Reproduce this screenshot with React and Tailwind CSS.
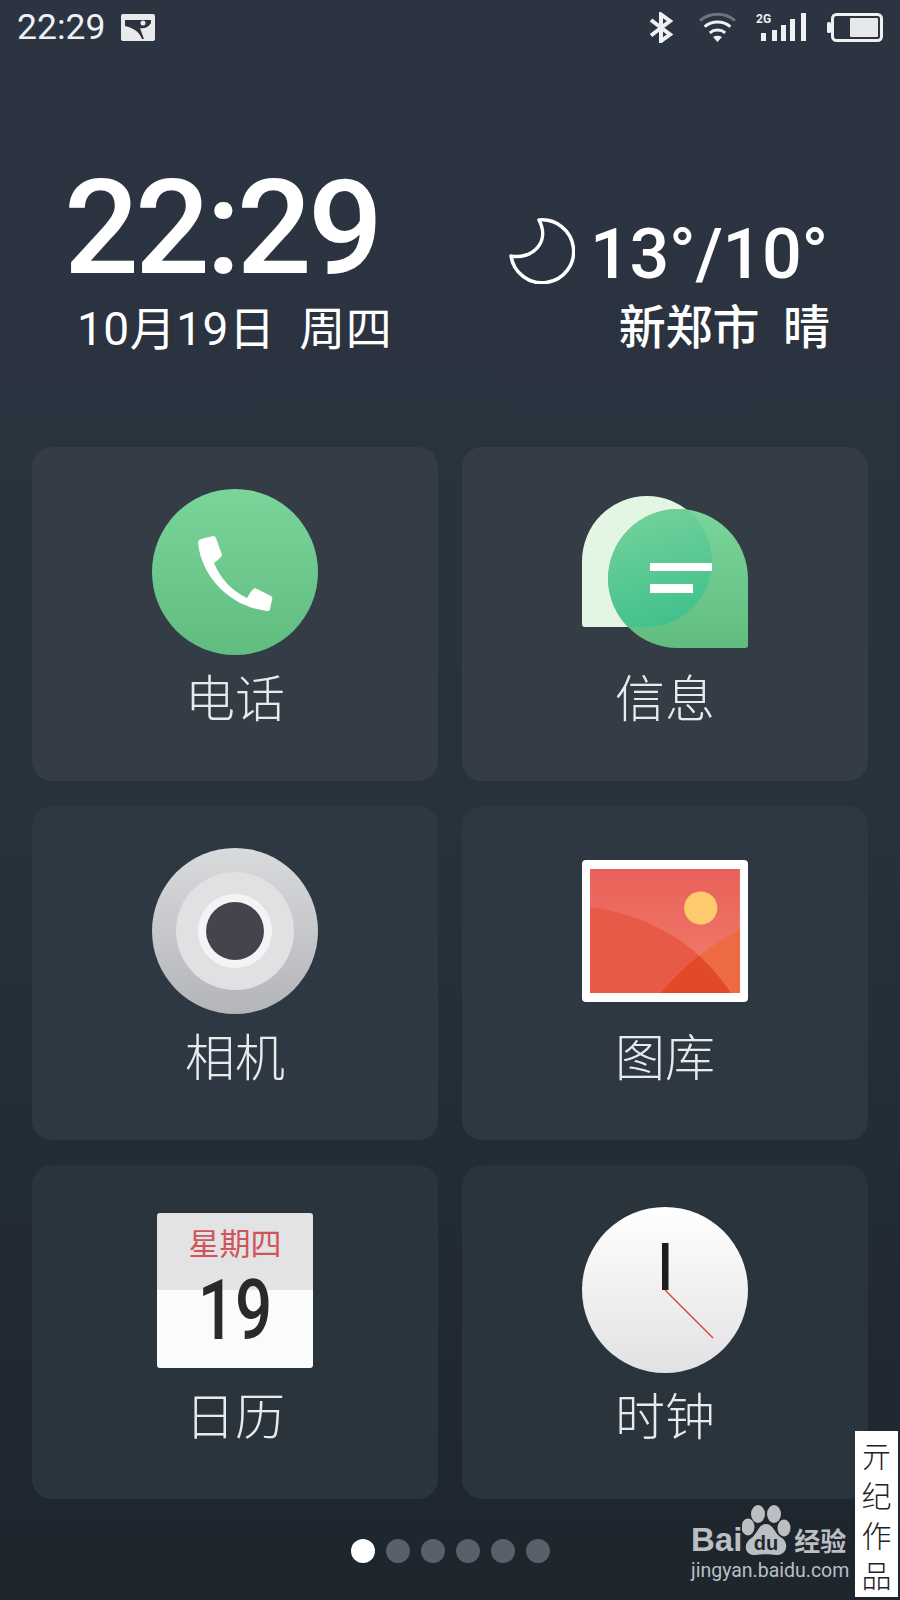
const cjk = 'font-["Roboto","Noto_Sans_CJK_SC",sans-serif]'

const PhoneIcon = () => (
  <svg width="166" height="166" viewBox="0 0 166 166">
    <defs>
      <linearGradient id="phone" x1="0" y1="0" x2="0" y2="1">
        <stop offset="0" stopColor="#7ad59b" />
        <stop offset="1" stopColor="#61bc80" />
      </linearGradient>
    </defs>
    <circle cx="83" cy="83" r="83" fill="url(#phone)" />
    <path
      d="M46 54 Q46 51 49 50 L61 47 Q63 47 64 49 L70 66 Q70 68 62 74 Q72 98 95 109 Q100 100 103 99 L119 107 Q121 108 120 111 L118 120 Q118 122 115 122 C80 118 50 90 46 54Z"
      fill="#fff"
    />
  </svg>
)

const MessageIcon = () => {
  const back = 'M0 65 A65 65 0 0 1 130 65 A65.500 65.500 0 0 1 65 131 L3 131 Q0 131 0 128Z'
  const front = 'M26 83 A70 70 0 0 1 166 83 L166 149 Q166 152 163 152 L96 152 A70 70 0 0 1 26 83Z'
  return (
    <svg width="166" height="152" viewBox="0 0 166 152">
      <defs>
        <linearGradient id="msgFront" x1="0" y1="0" x2="0" y2="1">
          <stop offset="0" stopColor="#7ad59c" />
          <stop offset="1" stopColor="#61bd7f" />
        </linearGradient>
        <linearGradient id="msgMix" x1="0" y1="0" x2="0.3" y2="1">
          <stop offset="0" stopColor="#78d29b" />
          <stop offset="1" stopColor="#3abf8b" />
        </linearGradient>
        <clipPath id="msgClip">
          <path d={back} />
        </clipPath>
      </defs>
      <path d={back} fill="#e2f6e3" />
      <path d={front} fill="url(#msgFront)" />
      <path d={front} fill="url(#msgMix)" clipPath="url(#msgClip)" />
      <rect x="68" y="67" width="62" height="8" fill="#fff" />
      <rect x="68" y="88" width="43" height="9" fill="#fff" />
    </svg>
  )
}

const CameraIcon = () => (
  <svg width="166" height="166" viewBox="0 0 166 166">
    <defs>
      <linearGradient id="cam" x1="0" y1="0" x2="0" y2="1">
        <stop offset="0" stopColor="#d9dadc" />
        <stop offset="1" stopColor="#b4b5b9" />
      </linearGradient>
    </defs>
    <circle cx="83" cy="83" r="83" fill="url(#cam)" />
    <circle cx="83" cy="83" r="59" fill="#e0e1e3" />
    <circle cx="83" cy="83" r="37" fill="#f4f4f6" />
    <circle cx="83" cy="83" r="29" fill="#45434c" />
  </svg>
)

const GalleryIcon = () => (
  <svg width="166" height="142" viewBox="0 0 165 142" preserveAspectRatio="none">
    <defs>
      <linearGradient id="sky" x1="0" y1="0" x2="0" y2="1">
        <stop offset="0" stopColor="#e9605a" />
        <stop offset="1" stopColor="#f1806c" />
      </linearGradient>
      <clipPath id="leftHill">
        <path d="M8 47 Q100 60 148 133 L8 133Z" />
      </clipPath>
    </defs>
    <rect width="165" height="142" rx="4" fill="#fff" />
    <rect x="8" y="9" width="149" height="124" fill="url(#sky)" />
    <circle cx="118" cy="48" r="16.500" fill="#fdcb6e" />
    <path d="M8 47 Q100 60 148 133 L8 133Z" fill="#e85a48" />
    <path d="M78 133 Q110 95 157 69 L157 133Z" fill="#ee6a43" />
    <path d="M78 133 Q110 95 157 69 L157 133Z" fill="#e04a28" clipPath="url(#leftHill)" />
  </svg>
)

const CalendarIcon = () => (
  <div className="relative flex h-[155px] w-[156px] flex-col overflow-hidden rounded-[3px]">
    <div className="flex h-[77px] justify-center bg-[#e3e2e4] pt-[12px]">
      <span className={`${cjk} text-[31px] leading-[40px] text-[#d0555a]`}>星期四</span>
    </div>
    <div className="flex-1 bg-[#fafbfd]" />
    <span className="absolute inset-x-0 top-[50px] scale-x-[0.78] text-center font-['Roboto',sans-serif] text-[84px] leading-[96px] font-medium text-[#2a2a2d]">
      19
    </span>
  </div>
)

const ClockIcon = () => (
  <svg width="166" height="166" viewBox="0 0 166 166">
    <defs>
      <linearGradient id="clock" x1="0" y1="0" x2="0" y2="1">
        <stop offset="0" stopColor="#ffffff" />
        <stop offset="1" stopColor="#e2e2e4" />
      </linearGradient>
    </defs>
    <circle cx="83" cy="83" r="83" fill="url(#clock)" />
    <rect x="80" y="36" width="6.500" height="47" fill="#1d1d1f" />
    <line x1="83" y1="83" x2="131" y2="131" stroke="#d9453c" strokeWidth="1.500" />
  </svg>
)

const apps = [
  { label: '电话', icon: <PhoneIcon />, bg: 'bg-[#343c46]' },
  { label: '信息', icon: <MessageIcon />, bg: 'bg-[#343c46]' },
  { label: '相机', icon: <CameraIcon />, bg: 'bg-[#2d3842]' },
  { label: '图库', icon: <GalleryIcon />, bg: 'bg-[#2d3842]' },
  { label: '日历', icon: <CalendarIcon />, bg: 'bg-[#2a343d]' },
  { label: '时钟', icon: <ClockIcon />, bg: 'bg-[#2a343d]' },
]

const StatusIcons = () => (
  <div className="flex items-start">
    {/* bluetooth */}
    <svg width="25" height="31" viewBox="0 0 25 31" className="mt-[12px]" fill="none" stroke="#eef0f2" strokeWidth="4">
      <path d="M2 8 L21 22.500 L12 29 L12 2.500 L21 9 L2 23.500" />
    </svg>
    {/* wifi */}
    <svg width="37" height="31" viewBox="0 0 37 31" className="mt-[12px] ml-[25px]" fill="none" strokeWidth="3">
      <path d="M1 8.500 A28 28 0 0 1 36 8.500" stroke="#6d747d" />
      <path d="M5.600 14.700 A20 20 0 0 1 31.400 14.700" stroke="#eef0f2" />
      <path d="M10.800 20.800 A12 12 0 0 1 26.200 20.800" stroke="#eef0f2" />
      <path d="M18.500 30 L14 25 Q18.500 22.500 23 25Z" fill="#eef0f2" stroke="none" />
    </svg>
    {/* signal */}
    <svg width="51" height="31" viewBox="0 0 51 31" className="mt-[12px] ml-[20px]" fill="#eef0f2">
      <text x="0" y="11" fontFamily="Roboto, sans-serif" fontSize="12" fontWeight="700">2G</text>
      <rect x="5" y="21" width="5" height="8" />
      <rect x="16" y="18" width="5" height="11" />
      <rect x="25" y="13" width="5" height="16" />
      <rect x="34" y="7" width="5" height="22" />
      <rect x="45" y="1" width="5" height="28" />
    </svg>
    {/* battery */}
    <svg width="56" height="29" viewBox="0 0 56 29" className="mt-[13px] ml-[20px]">
      <rect x="0" y="9" width="4" height="11" rx="1.500" fill="#eef0f2" />
      <rect x="5.500" y="1.500" width="49" height="26" rx="4" fill="none" stroke="#eef0f2" strokeWidth="3" />
      <rect x="23" y="5" width="28" height="19" rx="1" fill="#e6e8ea" />
    </svg>
  </div>
)

const Watermark = () => (
  <>
    <div className="absolute top-[1504px] left-[691px] flex w-[164px] flex-col text-[#bcbfc2]">
      <div className="flex h-[52px] items-end">
        <span className="pb-[1px] font-['Liberation_Sans',sans-serif] text-[33px] leading-[30px] font-bold">Bai</span>
        <svg width="50" height="52" viewBox="0 0 50 52" className="shrink-0">
          <ellipse cx="16" cy="10" rx="7" ry="9" fill="#bcbfc2" />
          <ellipse cx="32" cy="10" rx="7" ry="9" fill="#bcbfc2" />
          <ellipse cx="6" cy="23" rx="6.500" ry="8.500" fill="#bcbfc2" />
          <ellipse cx="42" cy="24" rx="6.500" ry="8.500" fill="#bcbfc2" />
          <path d="M24 20 C32 20 32 30 40 34 C48 40 44 52 34 51 C28 50 20 50 14 51 C4 52 0 42 8 35 C16 30 16 20 24 20Z" fill="#bcbfc2" />
          <text x="24" y="46" textAnchor="middle" fontFamily="Liberation Sans, sans-serif" fontSize="20" fontWeight="700" fill="#1f2831">du</text>
        </svg>
        <span className={`${cjk} ml-[2px] text-[26px] leading-[28px] font-bold`}>经验</span>
      </div>
      <span className="mt-[3px] font-['Roboto',sans-serif] text-[19.500px] leading-[24px] whitespace-nowrap">jingyan.baidu.com</span>
    </div>
    <div className="absolute top-[1431px] left-[855px] flex h-[166px] w-[43px] flex-col items-center justify-between bg-white py-[6px] font-['Noto_Sans_CJK_SC',sans-serif] text-[30px] leading-[34px] font-light text-[#222]">
      <span>亓</span>
      <span>纪</span>
      <span>作</span>
      <span>品</span>
    </div>
  </>
)

export default function App() {
  return (
    <div className="relative flex h-[1600px] w-[900px] flex-col overflow-hidden bg-gradient-to-b from-[#2c3441] via-[#27323c] to-[#1d252d] text-white">
      {/* status bar */}
      <div className="flex h-[55px] justify-between pr-[17px] pl-[17px]">
        <div className="flex items-start">
          <span className="mt-[7px] font-['Roboto',sans-serif] text-[35.500px] leading-[40px] font-normal text-[#eef0f2]">22:29</span>
          <svg width="34" height="27" viewBox="0 0 34 27" className="mt-[14px] ml-[16px]">
            <rect width="34" height="27" rx="2" fill="#e8eaec" />
            <path d="M4 6 H30 V9 C27 14 22 15 19 14 L23 25 L21 25 C18 17 12 14 4 12Z" fill="#2b3340" />
            <circle cx="22" cy="9" r="2.500" fill="#e8eaec" />
          </svg>
        </div>
        <StatusIcons />
      </div>

      {/* clock + weather */}
      <div className="flex h-[392px] items-start justify-between pr-[72px] pl-[64px]">
        <div className="flex flex-col items-start">
          <span className="mt-[118px] font-['Roboto',sans-serif] text-[132px] leading-[110px] font-medium tracking-[-4px]">22:29</span>
          <span className={`${cjk} mt-[22px] ml-[13px] text-[46px] leading-[48px] tracking-[0.5px] whitespace-pre`}>10月19日  周四</span>
        </div>
        <div className="flex flex-col items-end">
          <div className="mt-[155px] flex items-start">
            <svg width="66" height="66" viewBox="0 0 66 66" className="mt-[8px]" fill="none" stroke="#fff" strokeWidth="3.500" strokeLinejoin="round">
              <path d="M30 2 A31.500 31.500 0 1 1 2 38 C22 42 42 25 30 2Z" />
            </svg>
            <span className="mt-[3px] ml-[15px] font-['Roboto',sans-serif] text-[70px] leading-[82px] font-medium tracking-[-0.300px]">13°/10°</span>
          </div>
          <span className={`${cjk} mt-[7px] mr-[-2px] text-[47px] leading-[52px] font-medium whitespace-pre`}>新郑市  晴</span>
        </div>
      </div>

      {/* app grid */}
      <div className="grid grid-cols-2 gap-x-[24px] gap-y-[25px] px-[32px]">
        {apps.map((app) => (
          <div key={app.label} className={`flex h-[334px] flex-col items-center rounded-[20px] pt-[42px] ${app.bg}`}>
            <div className="flex h-[166px] items-center justify-center">{app.icon}</div>
            <span className={`${cjk} mt-[21px] text-[50px] leading-[48px] font-light text-[#e8eaec]`}>{app.label}</span>
          </div>
        ))}
      </div>

      {/* page dots */}
      <div className="mt-[40px] flex justify-center gap-[11px]">
        <span className="h-[24px] w-[24px] rounded-full bg-white" />
        {[1, 2, 3, 4, 5].map((i) => (
          <span key={i} className="h-[24px] w-[24px] rounded-full bg-[#586069]" />
        ))}
      </div>

      <Watermark />
    </div>
  )
}
